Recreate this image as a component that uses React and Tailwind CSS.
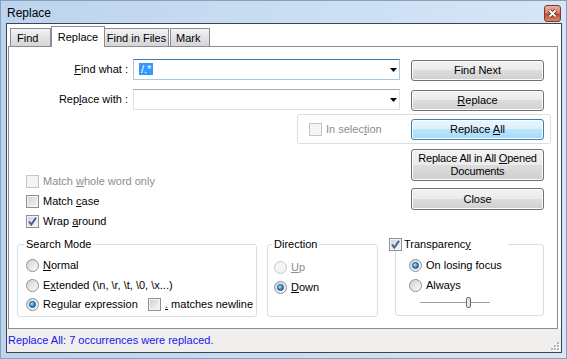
import React from 'react';

const Box = ({ checked, disabled }) => (
  <span
    className={`flex h-[13px] w-[13px] shrink-0 items-center justify-center border ${
      disabled
        ? 'border-[#c5c5c5] bg-[#f4f4f4]'
        : 'border-[#8e8f8f] bg-[linear-gradient(135deg,#cdd0d4,#f8f8f8)] shadow-[inset_0_0_0_1px_#f5f5f5]'
    }`}
  >
    {checked && (
      <svg width="11" height="11" viewBox="0 0 11 11">
        <path d="M2 5.5 L4.3 8.5 L9 1.8" fill="none" stroke="#4a5f97" strokeWidth="2" />
      </svg>
    )}
  </span>
);

const Radio = ({ checked, disabled }) => (
  <span
    className={`flex h-[13px] w-[13px] shrink-0 items-center justify-center rounded-full border ${
      disabled
        ? 'border-[#c8c8c8] bg-[#f4f4f4]'
        : 'border-[#8e8f8f] bg-[linear-gradient(135deg,#d0d2d5,#fbfbfb)]'
    }`}
  >
    {checked && (
      <span className="h-[7px] w-[7px] rounded-full border border-[#1d4f86] bg-[radial-gradient(circle_at_35%_35%,#bdeeff,#3a9be3_45%,#0f4d8f)]" />
    )}
  </span>
);

const Btn = ({ children, focused, className = '' }) => (
  <div
    className={`flex items-center justify-center rounded-[3px] border text-center leading-[13px] shadow-[inset_0_0_0_1px_#fcfcfc] ${
      focused
        ? 'border-[#3c7fb1] bg-[linear-gradient(#eaf6fd_0%,#d9f0fc_49%,#bee6fd_50%,#a7d9f5_100%)]'
        : 'border-[#707070] bg-[linear-gradient(#f2f2f2_0%,#ebebeb_49%,#dddddd_50%,#cfcfcf_100%)]'
    } ${className}`}
  >
    {children}
  </div>
);

const Combo = ({ focused, children }) => (
  <div
    className={`flex h-[21px] w-[267px] items-center border pl-[5px] pr-[2px] ${
      focused ? 'border-[#a9c9e2] border-t-[#3d7bad]' : 'border-[#dcdfe6] border-t-[#abadb3]'
    }`}
  >
    <div className="flex-1">{children}</div>
    <svg width="7" height="4" viewBox="0 0 7 4">
      <path d="M0 0h7L3.5 4z" fill="#000" />
    </svg>
  </div>
);

const Option = ({ children, className = '' }) => (
  <div className={`flex items-center gap-[4px] ${className}`}>{children}</div>
);

export default function App() {
  return (
    <div className="flex h-[359px] w-[567px] flex-col border border-[#8aa0b9] bg-[linear-gradient(90deg,#bdd4ee,#d6e6f6)] font-['Liberation_Sans',Arial,sans-serif] text-[11px] leading-[13px] text-black">
      {/* Title bar */}
      <div className="flex h-[22px] items-start justify-between pl-[6px] pr-[5px]">
        <span className="mt-[5px] text-[12px] leading-[15px]">Replace</span>
        <div className="mt-[4px] flex h-[17px] w-[17px] items-center justify-center rounded-[3px] border border-[#7b3b30] bg-[linear-gradient(#eab0a3,#d47a66_48%,#c0472f_52%,#d8856a)]">
          <svg width="11" height="11" viewBox="0 0 11 11">
            <path d="M2.5 2.5 L8.5 8.5 M8.5 2.5 L2.5 8.5" stroke="#4a1d14" strokeWidth="3.6" />
            <path d="M2.5 2.5 L8.5 8.5 M8.5 2.5 L2.5 8.5" stroke="#fff" strokeWidth="2" />
          </svg>
        </div>
      </div>

      {/* Client */}
      <div className="mb-[5px] ml-[5px] mr-[4px] flex flex-1 flex-col border border-[#3b4550] bg-white">
        {/* Tabs */}
        <div className="flex h-[22px] items-end pl-[3px]">
          <div className="flex h-[18px] w-[41px] items-center border border-b-0 border-[#898c95] bg-[linear-gradient(#f4f4f4,#e2e2e2_50%,#d6d6d6)] pl-[6px] pt-[1px]">
            Find
          </div>
          <div className="relative z-10 -mb-px flex h-[21px] w-[54px] items-start justify-center border border-b-0 border-[#898c95] bg-white pt-[4px]">
            Replace
          </div>
          <div className="flex h-[18px] w-[64px] items-center justify-center border border-b-0 border-l-0 border-[#898c95] bg-[linear-gradient(#f4f4f4,#e2e2e2_50%,#d6d6d6)] pt-[1px]">
            Find in Files
          </div>
          <div className="ml-[1px] flex h-[18px] w-[40px] items-center border border-b-0 border-[#898c95] bg-[linear-gradient(#f4f4f4,#e2e2e2_50%,#d6d6d6)] pl-[5px] pt-[1px]">
            Mark
          </div>
        </div>

        {/* Panel */}
        <div className="ml-[1px] mr-[3px] flex flex-1 flex-col border border-[#898c95] bg-white">
          <div className="mt-[12px] flex items-start">
            <div className="flex h-[21px] w-[124px] items-center justify-end pr-[5px]">
              <span>
                <u>F</u>ind what :
              </span>
            </div>
            <Combo focused>
              <span className="bg-[#3399ff] px-[2px] text-white">/.*</span>
            </Combo>
            <Btn className="ml-[11px] mt-[1px] h-[21px] w-[133px]">Find Next</Btn>
          </div>

          <div className="mt-[8px] flex items-start">
            <div className="flex h-[21px] w-[124px] items-center justify-end pr-[5px]">
              <span>
                Rep<u>l</u>ace with :
              </span>
            </div>
            <Combo />
            <Btn className="ml-[11px] mt-[1px] h-[21px] w-[133px]">
              <span>
                <u>R</u>eplace
              </span>
            </Btn>
          </div>

          <div className="ml-[288px] mt-[3px] flex h-[30px] w-[254px] items-center rounded-[3px] border border-[#d5dfe5] pl-[11px] pr-[6px]">
            <Option className="gap-[2px] text-[#8d8d8d]">
              <Box disabled />
              <span>
                In selec<u>t</u>ion
              </span>
            </Option>
            <Btn focused className="ml-auto h-[21px] w-[133px]">
              <span>
                Replace <u>A</u>ll
              </span>
            </Btn>
          </div>

          <div className="flex">
            <div className="w-[402px] pl-[17px] pt-[27px]">
              <Option className="h-[20px] text-[#8d8d8d]">
                <Box disabled />
                <span>
                  Match <u>w</u>hole word only
                </span>
              </Option>
              <Option className="h-[20px]">
                <Box />
                <span>
                  Match <u>c</u>ase
                </span>
              </Option>
              <Option className="h-[20px]">
                <Box checked />
                <span>
                  Wrap <u>a</u>round
                </span>
              </Option>
            </div>
            <div className="pt-[5px]">
              <Btn className="h-[32px] w-[133px] tracking-[-0.2px]">
                <span>
                  Replace All in All <u>O</u>pened
                  <br />
                  Documents
                </span>
              </Btn>
              <Btn className="mt-[7px] h-[22px] w-[133px]">Close</Btn>
            </div>
          </div>

          {/* Groups */}
          <div className="mt-[7px] flex items-start">
            <fieldset className="ml-[8px] h-[79px] w-[240px] rounded-[3px] border border-[#d5dfe5]">
              <legend className="ml-[6px] px-[2px] leading-[13px]">Search Mode</legend>
              <div className="pl-[8px] pt-[4px]">
                <Option className="h-[20px]">
                  <Radio />
                  <span>
                    <u>N</u>ormal
                  </span>
                </Option>
                <Option className="h-[20px]">
                  <Radio />
                  <span>
                    E<u>x</u>tended (\n, \r, \t, \0, \x...)
                  </span>
                </Option>
                <div className="flex h-[19px] items-center">
                  <Option className="w-[122px]">
                    <Radio checked />
                    <span>
                      Re<u>g</u>ular expression
                    </span>
                  </Option>
                  <Option>
                    <Box />
                    <span>
                      <u>.</u> matches newline
                    </span>
                  </Option>
                </div>
              </div>
            </fieldset>

            <fieldset className="ml-[10px] h-[79px] w-[111px] rounded-[3px] border border-[#d5dfe5]">
              <legend className="ml-[4px] px-[2px] leading-[13px]">Direction</legend>
              <div className="pl-[6px] pt-[6px]">
                <Option className="h-[20px] text-[#8d8d8d]">
                  <Radio disabled />
                  <span>
                    <u>U</u>p
                  </span>
                </Option>
                <Option className="h-[20px]">
                  <Radio checked />
                  <span>
                    <u>D</u>own
                  </span>
                </Option>
              </div>
            </fieldset>

            <fieldset className="ml-[17px] h-[78px] w-[149px] rounded-[3px] border border-[#d5dfe5]">
              <legend className="-ml-[7px] w-[119px] bg-white leading-[13px]">
                <span className="inline-flex items-center gap-[2px] align-top">
                  <Box checked />
                  <span>
                    Transparenc<u>y</u>
                  </span>
                </span>
              </legend>
              <div className="pl-[13px] pt-[4px]">
                <Option className="h-[20px]">
                  <Radio checked />
                  <span>On losing focus</span>
                </Option>
                <Option className="h-[20px]">
                  <Radio />
                  <span>Always</span>
                </Option>
                <div className="relative ml-[11px] mt-[2px] h-[12px] w-[70px]">
                  <div className="absolute left-0 right-0 top-[5px] h-[2px] border-t border-b border-[#a0a0a0] border-b-white bg-[#dcdcdc]" />
                  <div className="absolute left-[46px] top-0 h-[11px] w-[5px] rounded-[2px] border border-[#6f6f6f] bg-[linear-gradient(90deg,#f4f4f4,#d8d8d8)]" />
                </div>
              </div>
            </fieldset>
          </div>
        </div>

        {/* Status bar */}
        <div className="flex h-[23px] items-center justify-between bg-[#f0efee] pl-[1px]">
          <span className="text-[#1515f0]">Replace All: 7 occurrences were replaced.</span>
          <svg className="mr-[1px] mt-auto mb-[1px]" width="11" height="11" viewBox="0 0 11 11">
            <g fill="#fff">
              <rect x="9" y="9" width="2" height="2" />
              <rect x="9" y="6" width="2" height="2" />
              <rect x="9" y="3" width="2" height="2" />
              <rect x="6" y="9" width="2" height="2" />
              <rect x="6" y="6" width="2" height="2" />
              <rect x="3" y="9" width="2" height="2" />
            </g>
            <g fill="#b5b5b5">
              <rect x="8" y="8" width="2" height="2" />
              <rect x="8" y="5" width="2" height="2" />
              <rect x="8" y="2" width="2" height="2" />
              <rect x="5" y="8" width="2" height="2" />
              <rect x="5" y="5" width="2" height="2" />
              <rect x="2" y="8" width="2" height="2" />
            </g>
          </svg>
        </div>
      </div>
    </div>
  );
}
